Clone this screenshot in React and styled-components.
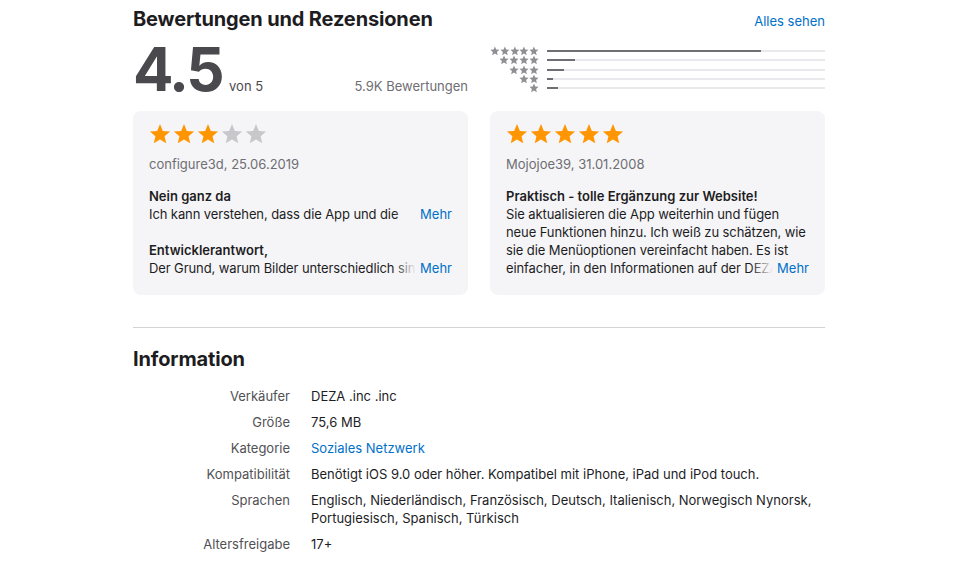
import React from 'react'
import styled, { createGlobalStyle } from 'styled-components'

const GlobalStyle = createGlobalStyle`
  html, body {
    margin: 0;
    padding: 0;
    background: #fff;
  }
  body {
    font-family: Inter, "Liberation Sans", sans-serif;
    color: #1d1d1f;
    -webkit-font-smoothing: antialiased;
  }
`

// data
const histogram = [77, 10, 6, 2, 4]

const reviews = [
  {
    rating: 3,
    author: 'configure3d, 25.06.2019',
    blocks: [
      { title: 'Nein ganz da', text: 'Ich kann verstehen, dass die App und die Fotoqualität nicht immer gleich sind.', lines: 1 },
      { title: 'Entwicklerantwort,', text: 'Der Grund, warum Bilder unterschiedlich sind, liegt an den Einstellungen.', lines: 1 },
    ],
  },
  {
    rating: 5,
    author: 'Mojojoe39, 31.01.2008',
    blocks: [
      {
        title: 'Praktisch - tolle Ergänzung zur Website!',
        text: 'Sie aktualisieren die App weiterhin und fügen neue Funktionen hinzu. Ich weiß zu schätzen, wie sie die Menüoptionen vereinfacht haben. Es ist einfacher, in den Informationen auf der DEZA Website zu navigieren.',
        lines: 4,
      },
    ],
  },
]

const info = [
  { label: 'Verkäufer', value: 'DEZA .inc .inc' },
  { label: 'Größe', value: '75,6 MB' },
  { label: 'Kategorie', value: 'Soziales Netzwerk', link: true },
  { label: 'Kompatibilität', value: 'Benötigt iOS 9.0 oder höher. Kompatibel mit iPhone, iPad und iPod touch.' },
  { label: 'Sprachen', value: 'Englisch, Niederländisch, Französisch, Deutsch, Italienisch, Norwegisch Nynorsk, Portugiesisch, Spanisch, Türkisch' },
  { label: 'Altersfreigabe', value: '17+' },
]

// UI
const Page = styled.div`
  width: 692px;
  margin-left: calc(50% - 347px);
  padding-top: 7px;
`

const SectionHeader = styled.div`
  display: flex;
  justify-content: space-between;
  align-items: baseline;
`

const Heading = styled.h2`
  margin: 0;
  font-size: 20px;
  line-height: 24px;
  font-weight: 700;
  letter-spacing: -0.15px;
  color: #1d1d1f;
`

const Link = styled.a`
  color: #0070c9;
  font-size: 13px;
  text-decoration: none;
  cursor: pointer;
`

const Columns = styled.div`
  display: grid;
  grid-template-columns: 1fr 1fr;
  column-gap: 22px;
`

const Summary = styled.div`
  display: flex;
  align-items: baseline;
  height: 70px;
  padding-top: 5px;
  box-sizing: border-box;
`

const BigScore = styled.span`
  font-size: 60px;
  line-height: 66px;
  font-weight: 700;
  letter-spacing: -2.5px;
  color: #4a4a4e;
`

const OutOf = styled.span`
  margin-left: 7px;
  font-size: 13px;
  color: #4a4a4e;
`

const Count = styled.span`
  margin-left: auto;
  font-size: 13px;
  color: #6e6e73;
`

const Histogram = styled.div`
  display: flex;
  flex-direction: column;
  padding-top: 15px;
`

const HistRow = styled.div`
  display: grid;
  grid-template-columns: 49px 1fr;
  column-gap: 8px;
  align-items: center;
  height: 9.25px;
`

const SmallStars = styled.div`
  display: flex;
  justify-content: flex-end;
`

const Track = styled.div`
  height: 2px;
  background: #e8e8ed;
`

const Fill = styled.div`
  height: 100%;
  background: #6e6e73;
`

const Cards = styled(Columns)`
  margin-top: 10px;
`

const Card = styled.div`
  background: #f5f5f7;
  border-radius: 8px;
  padding: 12px 16px 18px 16px;
  height: 184px;
  box-sizing: border-box;
`

const StarRow = styled.div`
  display: flex;
  gap: 2px;
`

const Author = styled.div`
  margin-top: 10px;
  font-size: 13px;
  line-height: 18px;
  color: #6e6e73;
`

const Block = styled.div`
  margin-top: ${p => (p.$first ? 14 : 18)}px;
`

const ReviewTitle = styled.div`
  font-size: 13px;
  line-height: 18px;
  font-weight: 600;
  color: #1d1d1f;
`

const BodyWrap = styled.div`
  position: relative;
`

const Body = styled.p`
  margin: 0;
  font-size: 13px;
  line-height: 18px;
  letter-spacing: -0.1px;
  color: #1d1d1f;
  height: ${p => p.$lines * 18}px;
  overflow: hidden;
`

const More = styled.a`
  position: absolute;
  right: 0;
  bottom: 0;
  padding-left: 26px;
  font-size: 13px;
  line-height: 18px;
  color: #0070c9;
  background: linear-gradient(to right, rgba(245, 245, 247, 0) 0, #f5f5f7 22px);
`

const Divider = styled.hr`
  margin: 32px 0 0;
  border: 0;
  border-top: 1px solid #d2d2d7;
`

const InfoHeading = styled(Heading)`
  margin-top: 19px;
`

const InfoGrid = styled.dl`
  display: grid;
  grid-template-columns: 157px 1fr;
  column-gap: 21px;
  row-gap: 8px;
  margin: 16px 0 0;
  font-size: 13px;
  line-height: 18px;
`

const Label = styled.dt`
  text-align: right;
  color: #515154;
`

const Value = styled.dd`
  margin: 0;
  color: ${p => (p.$link ? '#0070c9' : '#1d1d1f')};
`

function Star({ size, color }) {
  return (
    <svg width={size} height={size} viewBox="0 0 24 24">
      <polygon
        fill={color}
        points="12,1.2 15.1,8.6 23,9.2 17,14.4 18.8,22.2 12,18 5.2,22.2 7,14.4 1,9.2 8.9,8.6"
      />
    </svg>
  )
}

function ReviewCard({ review }) {
  return (
    <Card>
      <StarRow>
        {[1, 2, 3, 4, 5].map(i => (
          <Star key={i} size={22} color={i <= review.rating ? '#ff9500' : '#c7c7cc'} />
        ))}
      </StarRow>
      <Author>{review.author}</Author>
      {review.blocks.map((b, i) => (
        <Block key={i} $first={i === 0}>
          <ReviewTitle>{b.title}</ReviewTitle>
          <BodyWrap>
            <Body $lines={b.lines}>{b.text}</Body>
            <More>Mehr</More>
          </BodyWrap>
        </Block>
      ))}
    </Card>
  )
}

export default function App() {
  return (
    <>
      <GlobalStyle />
      <Page>
        <SectionHeader>
          <Heading>Bewertungen und Rezensionen</Heading>
          <Link>Alles sehen</Link>
        </SectionHeader>
        <Columns>
          <Summary>
            <BigScore>4.5</BigScore>
            <OutOf>von 5</OutOf>
            <Count>5.9K Bewertungen</Count>
          </Summary>
          <Histogram>
            {histogram.map((pct, i) => (
              <HistRow key={i}>
                <SmallStars>
                  {Array.from({ length: 5 - i }).map((_, j) => (
                    <Star key={j} size={10} color="#8e8e93" />
                  ))}
                </SmallStars>
                <Track>
                  <Fill style={{ width: `${pct}%` }} />
                </Track>
              </HistRow>
            ))}
          </Histogram>
        </Columns>
        <Cards>
          {reviews.map((r, i) => (
            <ReviewCard key={i} review={r} />
          ))}
        </Cards>
        <Divider />
        <InfoHeading>Information</InfoHeading>
        <InfoGrid>
          {info.map(row => (
            <React.Fragment key={row.label}>
              <Label>{row.label}</Label>
              <Value $link={row.link}>{row.value}</Value>
            </React.Fragment>
          ))}
        </InfoGrid>
      </Page>
    </>
  )
}
